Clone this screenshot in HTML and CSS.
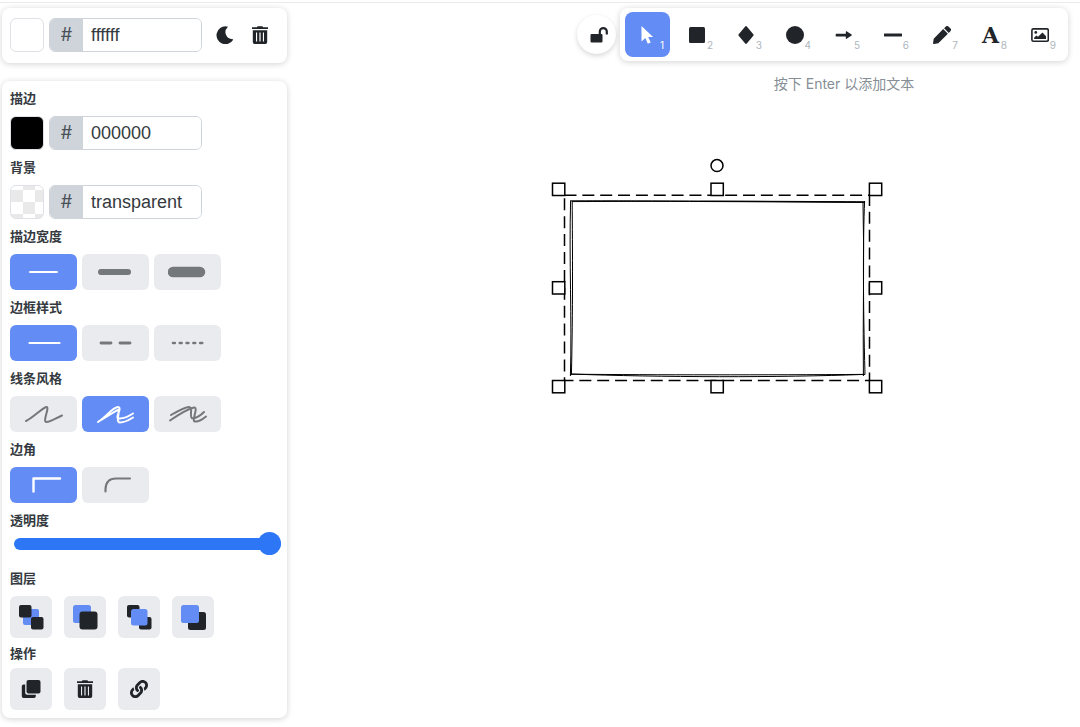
FILE: index.html
```html
<!DOCTYPE html>
<html lang="zh-CN">
<head>
<meta charset="utf-8">
<meta name="viewport" content="width=device-width, initial-scale=1">
<title>白板</title>
<link rel="stylesheet" href="styles.css">
</head>
<body>
<svg class="defs" aria-hidden="true">
  <symbol id="trash" viewBox="0 0 18 18">
    <path d="M1 1.2h4.8L6.6.2h4.8l.8 1H17v1.9H1z"/>
    <path fill-rule="evenodd" d="M1.8 4.3h14.4v11.9a1.7 1.7 0 0 1-1.7 1.7h-11a1.7 1.7 0 0 1-1.7-1.7zM5 6.6v8.8h1.1V6.6zM8.4 6.6v8.8h1.2V6.6zM11.9 6.6v8.8H13V6.6z"/>
  </symbol>
</svg>
<div class="app">
  <svg class="canvas" viewBox="0 0 1080 727" aria-hidden="true">
    <g class="sketch">
      <path d="M570.5 200.8C650 200.6 760 201.4 865 202.2"/>
      <path d="M572 201.6C680 201 780 202 864 202.4"/>
      <path d="M700 201.4C760 201 820 201.600 865 201.800"/>
      <path d="M864.6 201C863 240 863 300 865 374.5"/>
      <path d="M863 203C864.6 260 862.6 320 863.4 376"/>
      <path d="M864.5 374.4C780 377.6 660 377.4 570.5 374"/>
      <path d="M865 374.4C760 375 660 375 571 374.2"/>
      <path d="M570.4 376C572 320 569 260 570.6 200.5"/>
      <path d="M571.4 375C573 310 572.5 250 572.2 201"/>
    </g>
    <g class="selection">
      <path stroke-dasharray="12 5.85" d="M564.5 195.3H869.5"/>
      <path stroke-dasharray="12 5.9" stroke-dashoffset="-3" d="M564.5 195.3V380.5"/>
      <path stroke-dasharray="12 5.85" d="M869.5 194V380.5"/>
      <path stroke-dasharray="12 5.85" stroke-dashoffset="3" d="M564.5 380.5H869.5"/>
      <rect x="552.5" y="183.2" width="12.3" height="12.3"/>
      <rect x="711" y="183.2" width="12.3" height="12.3"/>
      <rect x="869.4" y="183.2" width="12.3" height="12.3"/>
      <rect x="552.5" y="281.7" width="12.3" height="12.3"/>
      <rect x="869.4" y="281.7" width="12.3" height="12.3"/>
      <rect x="552.5" y="380.5" width="12.3" height="12.3"/>
      <rect x="711" y="380.5" width="12.3" height="12.3"/>
      <rect x="869.4" y="380.5" width="12.3" height="12.3"/>
      <circle cx="717" cy="165.6" r="6"/>
    </g>
  </svg>

  <aside class="sidebar">
    <section class="panel panel-top">
      <div class="row">
        <button class="swatch" type="button" aria-label="画布背景"></button>
        <label class="field"><span class="hash">#</span><input class="hex" type="text" value="ffffff" spellcheck="false"></label>
        <div class="actions">
          <button class="plain" type="button" aria-label="深色模式"><svg viewBox="0 0 18 18" width="18" height="18"><path d="M10.2.4A8.9 8.9 0 1 0 17 13.9c.3-.4 0-.8-.5-.7A7 7 0 0 1 11.600 1.200c.4-.3.3-.7-.2-.8z"/></svg></button>
          <button class="plain" type="button" aria-label="清除画布"><svg width="18" height="18"><use href="#trash"/></svg></button>
        </div>
      </div>
    </section>

    <section class="panel">
      <h3 class="title">描边</h3>
      <div class="row">
        <button class="swatch swatch-black" type="button" aria-label="描边颜色"></button>
        <label class="field"><span class="hash">#</span><input class="hex" type="text" value="000000" spellcheck="false"></label>
      </div>
      <h3 class="title">背景</h3>
      <div class="row">
        <button class="swatch swatch-clear" type="button" aria-label="背景颜色"></button>
        <label class="field"><span class="hash">#</span><input class="hex" type="text" value="transparent" spellcheck="false"></label>
      </div>

      <h3 class="title">描边宽度</h3>
      <div class="row">
        <label class="option"><input type="radio" name="width" aria-label="细" checked><svg viewBox="0 0 40 20"><path stroke-width="2" d="M6 10h27"/></svg></label>
        <label class="option"><input type="radio" name="width" aria-label="粗"><svg viewBox="0 0 40 20"><path stroke-width="6" d="M5 10h27"/></svg></label>
        <label class="option"><input type="radio" name="width" aria-label="特粗"><svg viewBox="0 0 40 20"><path stroke-width="10.500" d="M5 10h27"/></svg></label>
      </div>

      <h3 class="title">边框样式</h3>
      <div class="row">
        <label class="option"><input type="radio" name="style" aria-label="实线" checked><svg viewBox="0 0 40 20"><path stroke-width="2.200" d="M5.500 10h30"/></svg></label>
        <label class="option"><input type="radio" name="style" aria-label="虚线"><svg viewBox="0 0 40 20"><path stroke-width="2.800" d="M5 10h10M24 10h10"/></svg></label>
        <label class="option"><input type="radio" name="style" aria-label="点线"><svg viewBox="0 0 40 20"><path stroke-width="2.600" d="M5 10h1.800M11.800 10h1.800M18.600 10h1.800M25.400 10h1.800M32.200 10h2"/></svg></label>
      </div>

      <h3 class="title">线条风格</h3>
      <div class="row">
        <label class="option"><input type="radio" name="sloppiness" aria-label="工整"><svg viewBox="0 0 40 20"><path d="M2 17C10 13 18 4 22.500 3C26 3.500 18 18 22.500 18C27 18 32 14 38 11.500"/></svg></label>
        <label class="option"><input type="radio" name="sloppiness" aria-label="艺术" checked><svg viewBox="0 0 40 20"><path d="M2 18C10 13 17 3 22 3C27 4 18 14 23 14.500C28 15 33 12 37 9.500M2.500 17.500C12 12 19 7 22 6C24.500 8 19 18 24 18.500C29 18.500 33 16 37 13.500"/></svg></label>
        <label class="option"><input type="radio" name="sloppiness" aria-label="漫画"><svg viewBox="0 0 40 20"><path d="M3 11C10 7 17 3 21 3C26 3 20 14 25 14.500C29 14 33 11 36 8M2 16.500C10 11 20 5 26 3.500C31 3 23 17 27 17.500C31 18 35 15 38 12.500"/></svg></label>
      </div>

      <h3 class="title">边角</h3>
      <div class="row">
        <label class="option"><input type="radio" name="corner" aria-label="尖锐" checked><svg viewBox="0 0 40 20"><path stroke-width="2.400" d="M9.500 16.500V3.500H36"/></svg></label>
        <label class="option"><input type="radio" name="corner" aria-label="圆润"><svg viewBox="0 0 40 20"><path stroke-width="2.200" d="M9.500 16.500V14Q10 3.500 20 3.500H34"/></svg></label>
      </div>

      <h3 class="title"><label for="opacity">透明度</label></h3>
      <input class="slider" id="opacity" type="range" min="0" max="100" value="100">

      <h3 class="title">图层</h3>
      <div class="row row-wide">
        <button class="tile" type="button" aria-label="置于底层"><svg viewBox="0 0 26 26" width="26" height="26"><rect class="accent" x="5" y="5" width="16" height="16" rx="2"/><rect x="1" y="1" width="12.500" height="12.500" rx="2"/><rect x="13" y="13" width="12.500" height="12.500" rx="2"/></svg></button>
        <button class="tile" type="button" aria-label="下移一层"><svg viewBox="0 0 26 26" width="26" height="26"><rect class="accent" x="1" y="1" width="18" height="18" rx="2.500"/><rect x="7.500" y="7.500" width="18" height="18" rx="3"/></svg></button>
        <button class="tile" type="button" aria-label="上移一层"><svg viewBox="0 0 26 26" width="26" height="26"><rect x="1" y="1" width="12.500" height="12.500" rx="2"/><rect x="13" y="13" width="12.500" height="12.500" rx="2"/><rect class="accent" x="5" y="5" width="16.500" height="16.500" rx="2.500"/></svg></button>
        <button class="tile" type="button" aria-label="置于顶层"><svg viewBox="0 0 26 26" width="26" height="26"><rect x="8" y="8" width="18" height="18" rx="2.500"/><rect class="accent" x="1" y="1" width="18" height="18" rx="2.500"/></svg></button>
      </div>

      <h3 class="title title-compact">操作</h3>
      <div class="row row-wide">
        <button class="tile" type="button" aria-label="复制"><svg viewBox="0 0 20 20" width="20" height="20"><rect x="5.500" y="1" width="14" height="13.500" rx="2"/><path d="M4.200 5.500H2.500A1.700 1.700 0 0 0 .8 7.200v10.100A1.700 1.700 0 0 0 2.500 19h10.600a1.700 1.700 0 0 0 1.700-1.700v-1.500H6.200a2 2 0 0 1-2-2z"/></svg></button>
        <button class="tile" type="button" aria-label="删除"><svg width="18" height="18"><use href="#trash"/></svg></button>
        <button class="tile" type="button" aria-label="链接"><svg viewBox="0 0 512 512" width="18" height="18"><path d="M326.600 185.400c59.700 59.800 58.900 155.700.4 214.600-.1.100-.2.300-.4.400l-67.200 67.200c-59.300 59.300-155.700 59.300-215 0-59.300-59.300-59.300-155.700 0-215l37.100-37.100c9.800-9.800 26.800-3.300 27.300 10.600.6 17.700 3.800 35.500 9.700 52.700 2 5.800.6 12.300-3.800 16.600l-13.100 13.100c-28 28-28.900 73.700-1.200 102 28 28.600 74.100 28.700 102.300.5l67.200-67.200c28.200-28.200 28.100-73.800 0-101.800-3.700-3.700-7.400-6.600-10.300-8.600a16 16 0 0 1-6.900-12.600c-.4-10.600 3.300-21.500 11.700-29.800l21.100-21.100c5.500-5.500 14.200-6.200 20.600-1.700a152.500 152.500 0 0 1 20.500 17.200zM467.500 44.400c-59.300-59.300-155.700-59.300-215 0l-67.200 67.200c-.1.100-.3.300-.4.400-58.600 58.900-59.400 154.800.4 214.600a152.500 152.500 0 0 0 20.500 17.200c6.400 4.500 15.100 3.800 20.600-1.700l21.100-21.100c8.400-8.400 12.100-19.200 11.700-29.800a16 16 0 0 0-6.900-12.600c-2.900-2-6.600-4.900-10.300-8.600-28.100-28.100-28.200-73.600 0-101.800l67.200-67.200c28.200-28.200 74.300-28.100 102.300.5 27.800 28.300 26.800 73.900-1.200 102l-13.100 13.100c-4.400 4.400-5.800 10.800-3.800 16.600 5.900 17.200 9 35 9.700 52.700.5 13.900 17.500 20.400 27.300 10.600l37.100-37.100c59.300-59.300 59.300-155.700 0-215z"/></svg></button>
      </div>
    </section>
  </aside>

  <main class="stage">
    <div class="bar">
      <button class="lock" type="button" aria-label="锁定工具"><svg viewBox="0 0 18 16" width="18" height="16"><rect x=".5" y="7" width="12" height="8.500" rx="1"/><path class="line" stroke-width="2.200" d="M9.800 8V4.600a3.500 3.500 0 0 1 7 0V7.500"/></svg></button>
      <div class="tools-column">
        <nav class="tools" aria-label="工具">
          <button class="tool tool-active" type="button" aria-label="选择"><svg viewBox="0 0 18 18"><path d="M2.500 0v15.600l3.800-3.500 2.500 5.700 2.900-1.200-2.500-5.600h4.900z"/></svg><span class="key">1</span></button>
          <button class="tool" type="button" aria-label="矩形"><svg viewBox="0 0 18 18"><rect x="1" y="1" width="16" height="16" rx="1.500"/></svg><span class="key">2</span></button>
          <button class="tool" type="button" aria-label="菱形"><svg viewBox="0 0 18 18"><path d="M9 0q.5 0 1 .7l6.300 7.500q.6.800 0 1.600L10 17.300q-1 1.200-2 0L1.700 9.800q-.6-.8 0-1.600L8 .7Q8.500 0 9 0z"/></svg><span class="key">3</span></button>
          <button class="tool" type="button" aria-label="椭圆"><svg viewBox="0 0 18 18"><circle cx="9" cy="9" r="9"/></svg><span class="key">4</span></button>
          <button class="tool" type="button" aria-label="箭头"><svg viewBox="0 0 18 18"><path d="M1.200 7.700h9.600V5.800q0-.9.800-.6l5 3.200q.6.500 0 1l-5 3.400q-.8.400-.8-.5v-1.900H1.200q-.5 0-.5-.5V8.200q0-.5.5-.5z"/></svg><span class="key">5</span></button>
          <button class="tool" type="button" aria-label="线条"><svg viewBox="0 0 18 18"><rect x="0" y="7.500" width="18" height="3" rx=".4"/></svg><span class="key">6</span></button>
          <button class="tool" type="button" aria-label="自由书写"><svg viewBox="0 0 18 18"><path d="M10.200 3.100l4.700 4.700L5.300 17.300l-4.200.6a.8.800 0 0 1-1-1l.6-4.200zM11.100 2.200L12.900.5a1.800 1.800 0 0 1 2.500 0l2.100 2.100a1.800 1.800 0 0 1 0 2.500l-1.700 1.800z"/></svg><span class="key">7</span></button>
          <button class="tool" type="button" aria-label="文字"><span class="letter">A</span><span class="key">8</span></button>
          <button class="tool" type="button" aria-label="插入图像"><svg viewBox="0 0 18 18"><rect class="line" x=".9" y="2.900" width="16.400" height="12.400" rx="1.500" stroke-width="1.600"/><circle cx="4.800" cy="6.400" r="1.400"/><path d="M3.200 13v-1.600l2.200-2 1.600 1.400L11.500 6.500l3.500 3.700V13z"/></svg><span class="key">9</span></button>
        </nav>
        <p class="hint">按下 Enter 以添加文本</p>
      </div>
    </div>
  </main>
</div>
</body>
</html>
```

FILE: styles.css
```css
* {
  box-sizing: border-box;
}

body {
  margin: 0;
  background: #fff;
  color: #343a40;
  font-family: Inter, "Noto Sans CJK SC", sans-serif;
}

button,
input {
  margin: 0;
  padding: 0;
  font: inherit;
  color: inherit;
}

button {
  display: flex;
  align-items: center;
  justify-content: center;
  border: 0;
  background: none;
  cursor: pointer;
}

svg {
  display: block;
  flex: none;
  fill: #212529;
}

.defs {
  position: absolute;
  width: 0;
  height: 0;
}

.app {
  position: relative;
  display: flex;
  min-height: 100vh;
  padding: 5px 12px 8px 2px;
}

.app::before {
  content: "";
  position: absolute;
  top: 2px;
  left: 0;
  right: 0;
  height: 1px;
  background: #ebebeb;
}

.canvas {
  position: absolute;
  top: 0;
  left: 0;
  width: 1080px;
  height: 727px;
}

.sketch {
  fill: none;
  stroke: #000;
  stroke-width: 1;
}

.selection {
  fill: none;
  stroke: #000;
  stroke-width: 1.5;
}

.selection rect,
.selection circle {
  fill: #fff;
}

.line {
  fill: none;
  stroke: #212529;
}

.accent {
  fill: #648cf5;
}

/* Sidebar */

.sidebar {
  position: relative;
  flex: none;
  width: 285px;
  padding-top: 3px;
}

.panel {
  padding: 0 8px 8px;
  border-radius: 8px;
  background: #fff;
  box-shadow: 0 1px 6px rgba(0, 0, 0, 0.18);
}

.panel-top {
  margin-bottom: 18px;
  padding: 10px 8px 11px;
}

.title {
  margin: 0;
  font-size: 13px;
  line-height: 35px;
  font-weight: 700;
}

.title-compact {
  line-height: 30px;
}

.row {
  display: flex;
  gap: 5px;
}

.row-wide {
  gap: 12px;
}

.swatch {
  width: 34px;
  height: 34px;
  border: 1px solid #dee2e6;
  border-radius: 6px;
  background: #fff;
}

.swatch-black {
  background: #000;
}

.swatch-clear {
  background: repeating-conic-gradient(#fff 0 25%, #e9e9e9 0 50%) 0 4px / 24px 24px;
}

.field {
  display: flex;
  width: 153px;
  height: 34px;
  overflow: hidden;
  border: 1px solid #ced4da;
  border-radius: 6px;
  font-family: "Liberation Sans", sans-serif;
  font-size: 18px;
}

.hash {
  flex: none;
  width: 33px;
  background: #ced4da;
  color: #495057;
  font-family: Inter, sans-serif;
  line-height: 32px;
  text-align: center;
}

.hex {
  flex: 1;
  min-width: 0;
  padding-left: 8px;
  border: 0;
  outline: 0;
  background: #fff;
}

.actions {
  display: flex;
}

.plain {
  width: 35px;
  height: 33px;
}

.option {
  position: relative;
  display: flex;
  align-items: center;
  justify-content: center;
  width: 67px;
  height: 36px;
}

.option input {
  position: absolute;
  inset: 0;
  appearance: none;
  border-radius: 6px;
  background: #eaebef;
  cursor: pointer;
}

.option input:checked {
  background: #648cf5;
}

.option svg {
  position: relative;
  width: 40px;
  height: 20px;
  fill: none;
  stroke: #75787b;
  stroke-width: 2;
  stroke-linecap: round;
  stroke-linejoin: round;
  pointer-events: none;
}

.option input:checked + svg {
  stroke: #fff;
}

.slider {
  display: block;
  width: calc(100% - 2px);
  height: 23px;
  margin: -6px 0 6px 4px;
  appearance: none;
  background: none;
}

.slider::-webkit-slider-runnable-track {
  height: 12px;
  border-radius: 6px;
  background: #2d77f6;
}

.slider::-webkit-slider-thumb {
  width: 23px;
  height: 23px;
  margin-top: -6px;
  appearance: none;
  border-radius: 50%;
  background: #2d77f6;
}

.tile {
  width: 42px;
  height: 42px;
  border-radius: 6px;
  background: #eaebef;
}

/* Tools */

.stage {
  flex: 1;
  padding-top: 3px;
}

.bar {
  position: relative;
  display: flex;
  justify-content: flex-end;
  gap: 4px;
}

.lock {
  width: 39px;
  height: 39px;
  margin-top: 7px;
  padding-left: 4px;
  border-radius: 50%;
  background: #fff;
  box-shadow: 0 2px 5px rgba(0, 0, 0, 0.16);
}

.tools {
  display: flex;
  gap: 4px;
  padding: 4px 6px 4px 5px;
  border-radius: 8px;
  background: #fff;
  box-shadow: 0 1px 6px rgba(0, 0, 0, 0.18);
}

.tool {
  position: relative;
  width: 45px;
  height: 45px;
  border-radius: 8px;
}

.tool svg {
  width: 18px;
  height: 18px;
}

.tool-active {
  background: #648cf5;
}

.tool-active svg {
  fill: #fff;
}

.key {
  position: absolute;
  right: 6px;
  bottom: 6px;
  color: #adb5bd;
  font-size: 10px;
  line-height: 12px;
}

.tool-active .key {
  color: #fff;
}

.letter {
  color: #212529;
  font-family: "DejaVu Serif", serif;
  font-size: 22px;
  font-weight: 700;
  line-height: 24px;
}

.hint {
  margin: 12px 0 0;
  color: #868e96;
  font-size: 14px;
  line-height: 22px;
  text-align: center;
}
```
